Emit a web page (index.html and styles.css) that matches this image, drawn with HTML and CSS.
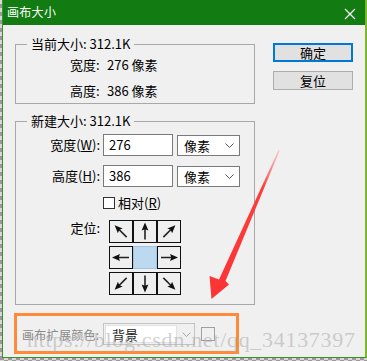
FILE: index.html
```html
<!DOCTYPE html>
<html>
	<head>
		<meta charset="utf-8">
		<title>画布大小</title>
		<link rel="stylesheet" href="styles.css">
	</head>
	<body>
	  <div class="window">
	    <div class="titlebar">
	      <span class="title">画布大小</span>
	      <svg class="close" width="12" height="12" viewBox="0 0 12 12">
	        <path d="M1 1L11 11M11 1L1 11" stroke="#fff" stroke-width="1.2"/>
	      </svg>
	    </div>

	    <div class="body">
	      <div class="main">
	        <fieldset class="group current">
	          <legend>当前大小: 312.1K</legend>
	          <div class="info-row"><span class="info-label">宽度:</span>276 像素</div>
	          <div class="info-row"><span class="info-label">高度:</span>386 像素</div>
	        </fieldset>

	        <fieldset class="group newsize">
	          <legend>新建大小: 312.1K</legend>
	          <div class="field-row">
	            <span class="field-label">宽度(<u>W</u>):</span>
	            <input class="num" type="text" value="276">
	            <div class="select unit"><span>像素</span>
	              <svg width="9" height="5" viewBox="0 0 9 5"><path d="M0.5 0.5L4.5 4.5L8.5 0.5" fill="none" stroke="#555"/></svg>
	            </div>
	          </div>
	          <div class="field-row">
	            <span class="field-label">高度(<u>H</u>):</span>
	            <input class="num" type="text" value="386">
	            <div class="select unit"><span>像素</span>
	              <svg width="9" height="5" viewBox="0 0 9 5"><path d="M0.5 0.5L4.5 4.5L8.5 0.5" fill="none" stroke="#555"/></svg>
	            </div>
	          </div>
	          <div class="field-row check-row">
	            <span class="field-label"></span>
	            <span class="checkbox"></span>
	            <span>相对(<u>R</u>)</span>
	          </div>
	          <div class="field-row anchor-row">
	            <span class="field-label">定位:</span>
	            <div class="anchor">
	              <div class="cell"><svg class="arr nw" viewBox="0 0 22 21"><use href="#arrow"/></svg></div>
	              <div class="cell"><svg class="arr n" viewBox="0 0 22 21"><use href="#arrow"/></svg></div>
	              <div class="cell"><svg class="arr ne" viewBox="0 0 22 21"><use href="#arrow"/></svg></div>
	              <div class="cell"><svg class="arr w" viewBox="0 0 22 21"><use href="#arrow"/></svg></div>
	              <div class="cell center"></div>
	              <div class="cell"><svg class="arr e" viewBox="0 0 22 21"><use href="#arrow"/></svg></div>
	              <div class="cell"><svg class="arr sw" viewBox="0 0 22 21"><use href="#arrow"/></svg></div>
	              <div class="cell"><svg class="arr s" viewBox="0 0 22 21"><use href="#arrow"/></svg></div>
	              <div class="cell"><svg class="arr se" viewBox="0 0 22 21"><use href="#arrow"/></svg></div>
	            </div>
	          </div>
	        </fieldset>

	        <div class="extend">
	          <span class="extend-label">画布扩展颜色:</span>
	          <div class="select bgsel">
	            <span class="bgsel-field">背景</span>
	            <svg width="9" height="5" viewBox="0 0 9 5"><path d="M0.5 0.5L4.5 4.5L8.5 0.5" fill="none" stroke="#a8a8a8"/></svg>
	          </div>
	          <span class="swatch"></span>
	        </div>
	      </div>

	      <div class="side">
	        <button class="btn primary">确定</button>
	        <button class="btn">复位</button>
	      </div>
	    </div>
	  </div>

	  <div class="watermark">https://blog.csdn.net/qq_34137397</div>

	  <!-- 标注箭头 -->
	  <svg class="annot" width="367" height="361" viewBox="0 0 367 361">
	    <defs>
	      <g id="arrow">
	        <path d="M11 18.5V7" stroke="#222" stroke-width="1.6"/>
	        <path d="M11 1.5L7.6 9.5L11 8.2L14.4 9.5Z" fill="#111"/>
	      </g>
	      <linearGradient id="red" x1="0" y1="0" x2="0" y2="1">
	        <stop offset="0" stop-color="#ff6b6b" stop-opacity="0.3"/>
	        <stop offset="0.25" stop-color="#ff3b3b"/>
	        <stop offset="1" stop-color="#fb3434"/>
	      </linearGradient>
	    </defs>
	    <path d="M278.5 150 L279.5 151 L225.5 281 L229 284.5 L211.5 299 L209.5 276 L219 279.5 Z" fill="url(#red)"/>
	  </svg>
	</body>
</html>
```

FILE: styles.css
```css
html, body {
  margin: 0;
  padding: 0;
}
body {
  position: relative;
  width: 367px;
  height: 361px;
  overflow: hidden;
  font-family: "Noto Sans CJK SC", "Noto Sans", sans-serif;
  font-size: 13px;
  color: #000;
  background-color: #d8d8d8;
  background-image:
    linear-gradient(45deg, #9a9a9a 25%, transparent 25%, transparent 75%, #9a9a9a 75%),
    linear-gradient(45deg, #9a9a9a 25%, transparent 25%, transparent 75%, #9a9a9a 75%);
  background-size: 8px 8px;
  background-position: 0 0, 4px 4px;
}

.window {
  margin-left: 2px;
  width: 362px;
  height: 357px;
  background: #f0f0f0;
  border-left: 1px solid #3a8f26;
  border-right: 2px solid #7bb62c;
  border-bottom: 1px solid #3a8f26;
}

.titlebar {
  height: 25px;
  background: #127b12;
  color: #fff;
  display: flex;
  align-items: center;
  justify-content: space-between;
  padding: 0 9px 0 4px;
}
.title {
  font-size: 12px;
  letter-spacing: 0.3px;
  margin-top: -2px;
}
.close {
  margin-top: 2px;
}

.body {
  display: flex;
  padding-left: 12px;
}
.main {
  width: 240px;
}

.group {
  margin: 0;
  padding: 0;
  min-width: 0;
  border: 1px solid #a8a8a8;
}
.group legend {
  margin-left: 11px;
  padding: 0 4px;
  line-height: 16px;
}
.current {
  margin-top: 11px;
  padding: 3px 0 2px 0;
}
.info-row {
  display: flex;
  line-height: 20px;
  padding-left: 54px;
}
.info-row + .info-row {
  margin-top: 6px;
}
.info-label {
  width: 37px;
}

.newsize {
  margin-top: 9px;
  padding: 4px 0 9px 0;
}
.field-row {
  display: flex;
  align-items: center;
}
.field-row + .field-row {
  margin-top: 8px;
}
.field-label {
  width: 84px;
  text-align: right;
  margin-right: 3px;
  line-height: 16px;
}
.num {
  box-sizing: border-box;
  width: 70px;
  height: 22px;
  margin: 0;
  padding: 0 5px;
  border: 1px solid #7a7a7a;
  font-family: inherit;
  font-size: 13px;
  background: #fff;
}
.select {
  box-sizing: border-box;
  display: flex;
  align-items: center;
  justify-content: space-between;
  background: #fff;
}
.unit {
  width: 63px;
  height: 21px;
  margin: 2px 0 0 4px;
  padding: 0 5px 0 6px;
  border: 1px solid #7a7a7a;
}

.check-row {
  margin-top: 6px !important;
}
.checkbox {
  box-sizing: border-box;
  width: 12px;
  height: 12px;
  border: 1px solid #333;
  background: #fff;
  margin-right: 3px;
}

.anchor-row {
  align-items: flex-start;
  margin-top: 8px !important;
}
.anchor-row .field-label {
  margin-right: 9px;
}
.anchor {
  display: grid;
  grid-template-columns: repeat(3, 24px);
  grid-auto-rows: 23px;
  row-gap: 3px;
}
.cell {
  box-sizing: border-box;
  border: 1px solid #111;
  background: #efefef;
  display: flex;
}
.cell.center {
  background: #bcd9f0;
  border-color: #9fc4e6;
}
.arr {
  width: 22px;
  height: 21px;
}
.arr.ne { transform: rotate(45deg); }
.arr.e  { transform: rotate(90deg); }
.arr.se { transform: rotate(135deg); }
.arr.s  { transform: rotate(180deg); }
.arr.sw { transform: rotate(225deg); }
.arr.w  { transform: rotate(270deg); }
.arr.nw { transform: rotate(315deg); }

.extend {
  box-sizing: border-box;
  width: 225px;
  height: 41px;
  margin: 8px 0 0 -1px;
  border: 3px solid #ff8a3a;
  display: flex;
  align-items: center;
  padding: 1px 0 0 5px;
  color: #8a8a8a;
}
.extend-label {
  width: 81px;
  font-size: 12px;
  white-space: nowrap;
  letter-spacing: 0.3px;
}
.bgsel {
  width: 92px;
  height: 22px;
  padding: 1px 3px 1px 1px;
  border: 1px solid #c4c4c4;
  background: #f0f0f0;
}
.bgsel-field {
  box-sizing: border-box;
  width: 72px;
  height: 18px;
  line-height: 17px;
  padding-left: 6px;
  border: 1px solid #e2e2e2;
  background: #fff;
  color: #222;
}
.swatch {
  box-sizing: border-box;
  width: 14px;
  height: 14px;
  margin-left: 6px;
  border: 1px solid #a0a0a0;
}

.side {
  display: flex;
  flex-direction: column;
  gap: 9px;
  margin-left: 18px;
  padding-top: 18px;
}
.btn {
  box-sizing: border-box;
  width: 80px;
  height: 19px;
  margin: 0;
  padding: 0;
  border: 1px solid #adadad;
  background: #e1e1e1;
  font-family: inherit;
  font-size: 13px;
  line-height: 16px;
  color: #000;
}
.btn.primary {
  border: 2px solid #0078d7;
}

.watermark {
  position: absolute;
  left: 27px;
  top: 327px;
  font-family: "Liberation Serif", serif;
  font-size: 22px;
  letter-spacing: 0.7px;
  color: rgba(170, 170, 170, 0.55);
  white-space: nowrap;
  pointer-events: none;
}

.annot {
  position: absolute;
  left: 0;
  top: 0;
  pointer-events: none;
}
```
